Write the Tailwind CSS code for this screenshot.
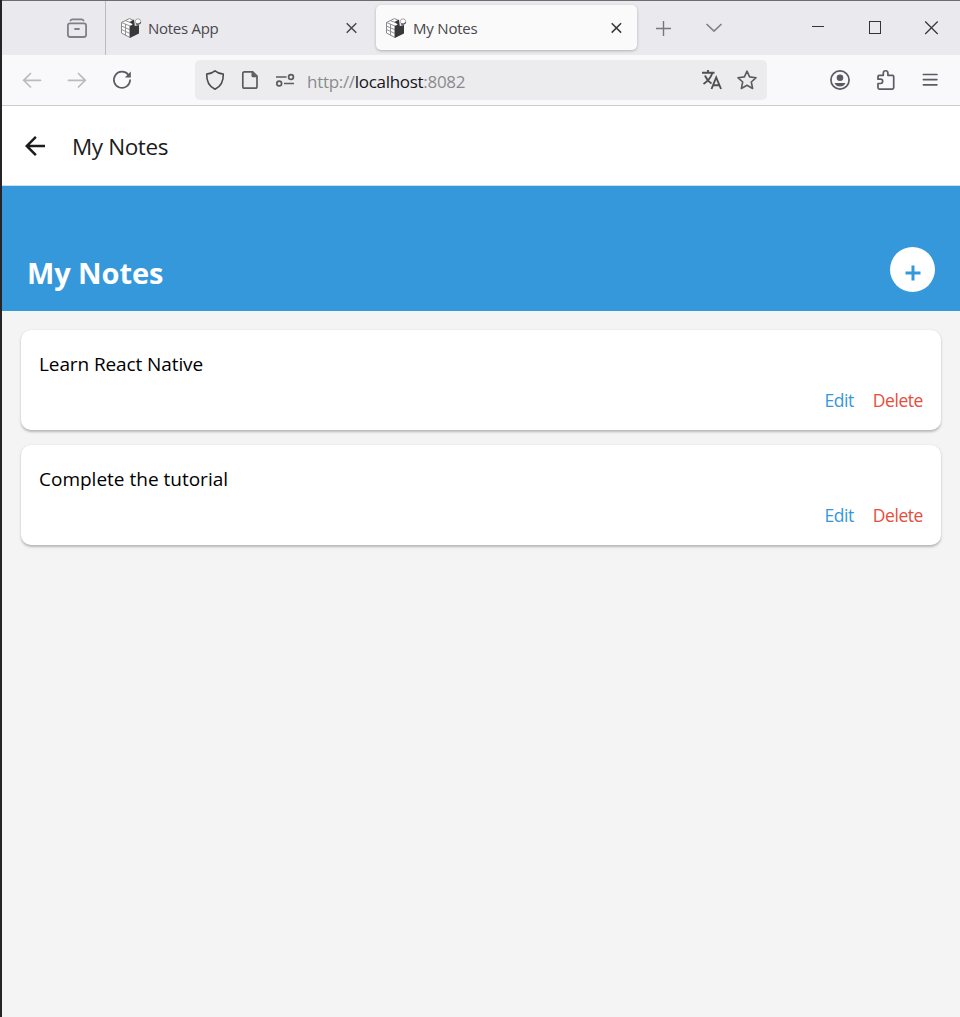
<!DOCTYPE html>
<html lang="en">
<head>
<meta charset="utf-8">
<title>My Notes</title>
<script src="https://cdn.jsdelivr.net/npm/@tailwindcss/browser@4"></script>
</head>
<body class="h-[1017px] w-[960px] overflow-hidden bg-[#f4f4f4] font-['Open_Sans','Noto_Sans',sans-serif]">
<svg class="hidden">
  <symbol id="cube" viewBox="0 0 22 22">
    <path d="M1.500 5.500 9.500 1.500l4 2-1 5-2.500 1v11L1.500 16z" fill="#fdfdfd" stroke="#88888b" stroke-width="1"/>
    <path d="M1.500 5.500l8.500 3.500M1.500 9l8.500 3.800M1.500 12.500l8.500 4M5.500 7v11.500M5 3.500l8 3" fill="none" stroke="#929295" stroke-width="1"/>
    <path d="M9.800 9l3.200-1.500-3.500-2.500 4.500-2.500.8 6.500 4.200-1v8.500L9.800 21z" fill="#38383a"/>
    <circle cx="18" cy="4.500" r="2.700" fill="#fff" stroke="#909093" stroke-width=".8"/>
    <path d="M16 6.700c2 1 4 .3 4.700-1.500" fill="none" stroke="#48484a" stroke-width="1.100"/>
  </symbol>
</svg>
<div class="flex h-full flex-col border-l-2 border-[#242428]">
  <header class="h-[106px] shrink-0 border-t border-b border-t-[#6f6c70] border-b-[#cbcbd0] bg-[#f9f9fb] text-[#5b5b66]">
    <div class="flex h-[54px] bg-[#eae9ee]">
      <div class="flex w-[104px] items-center border-r border-[#bcbbc0] pl-[63px]">
        <svg class="mt-[2px] size-6" viewBox="0 0 24 24" fill="none" stroke="#808087" stroke-width="1.800" stroke-linecap="round"><path d="M5.500 3.500q.5-1.200 2-1.200h9q1.500 0 2 1.200"/><rect x="2.900" y="6.400" width="18.200" height="13.600" rx="2.200"/><path d="M10 12h4"/></svg>
      </div>
      <div class="flex w-[270px] items-center pl-[14px]">
        <svg class="size-[22px]"><use href="#cube"/></svg>
        <span class="ml-[6px] w-[191px] whitespace-nowrap text-[15px] tracking-[-0.28px] text-[#47474d]">Notes App</span>
        <svg class="mt-[2px] size-6" viewBox="0 0 24 24" fill="none" stroke="#47474d" stroke-width="1.500"><path d="M7.700 6.200l9.600 9.600M17.300 6.200L7.700 15.800"/></svg>
      </div>
      <div class="mt-1 flex h-[45px] w-[261px] items-center rounded-[5px] bg-[#fafafa] pl-[9px] shadow-[0_1px_3px_rgba(0,0,0,0.25)]">
        <svg class="size-[22px]"><use href="#cube"/></svg>
        <span class="ml-[6px] w-[191px] whitespace-nowrap pt-[2px] text-[15px] tracking-[-0.2px] text-[#47474d]">My Notes</span>
        <svg class="size-6" viewBox="0 0 24 24" fill="none" stroke="#38383d" stroke-width="1.500"><path d="M7.700 7.200l9.400 9.400M17.100 7.200L7.700 16.600"/></svg>
      </div>
      <div class="flex grow items-center">
        <svg class="ml-[14px] size-6" viewBox="0 0 24 24" fill="none" stroke="#77777c" stroke-width="1.400"><path d="M5 12.500h15M12.500 5v15"/></svg>
        <svg class="ml-[26px] size-6" viewBox="0 0 24 24" fill="none" stroke="#808085" stroke-width="1.600"><path d="M5.500 8l7.500 7.200L20.500 8"/></svg>
        <svg class="ml-[80px] size-6" viewBox="0 0 24 24" stroke="#333338" shape-rendering="crispEdges"><path d="M7 10.500h12"/></svg>
        <svg class="ml-[33px] size-6" viewBox="0 0 24 24" fill="none" stroke="#333338" shape-rendering="crispEdges"><rect x="7.500" y="5.500" width="11" height="12"/></svg>
        <svg class="ml-[32px] size-6" viewBox="0 0 24 24" fill="none" stroke="#333338" stroke-width="1.200"><path d="M7.200 5.500l12.500 12.500M19.700 5.500L7.200 18"/></svg>
      </div>
    </div>
    <div class="flex h-[50px] items-center">
      <svg class="ml-[18px] size-6" viewBox="0 0 24 24" fill="none" stroke="#bbbbbd" stroke-width="1.700" stroke-linecap="round"><path d="M20.500 12.300H4M10.500 5.500L3.700 12.300l6.800 6.700"/></svg>
      <svg class="ml-[21px] size-6" viewBox="0 0 24 24" fill="none" stroke="#bbbbbd" stroke-width="1.700" stroke-linecap="round"><path d="M3.500 12.300H20M13.500 5.500l6.800 6.800-6.800 6.700"/></svg>
      <svg class="ml-[21px] size-6" viewBox="0 0 24 24" fill="none" stroke="#5b5b66" stroke-width="1.700" stroke-linecap="round"><path d="M18.300 6.700A8.100 8.100 0 1 0 20.100 12"/><path d="M20.800 3.500v6h-6z" fill="#5b5b66" stroke="none"/></svg>
      <div class="ml-[61px] flex h-10 w-[572px] items-center rounded-[5px] bg-[#ececee]">
        <svg class="ml-[8px] size-6" viewBox="0 0 24 24" fill="none" stroke="#4b4b52" stroke-width="1.600" stroke-linejoin="round"><path d="M12 2.800c2.500 2.100 5.500 3 8.300 3.300.2 7-2 12.400-8.300 15.200C5.700 18.500 3.500 13.100 3.700 6.100 6.500 5.800 9.500 4.900 12 2.800z"/></svg>
        <svg class="ml-[11px] size-6" viewBox="0 0 24 24" fill="none" stroke="#5b5b60" stroke-width="1.700" stroke-linejoin="round"><path d="M6.500 3.800h8.200l4.300 4.300v10.400q0 1.700-1.700 1.700H6.500q-1.700 0-1.700-1.700V5.500q0-1.700 1.700-1.700z"/><path d="M13.500 3.500l5.800 5.800h-4.300q-1.500 0-1.500-1.500z" fill="#5b5b60" stroke="none"/></svg>
        <svg class="ml-[11px] size-6" viewBox="0 0 24 24" fill="none" stroke="#5b5b60" stroke-width="1.700"><path d="M3 9h10.500M11 15.500h10"/><circle cx="18" cy="9" r="2.400"/><circle cx="6.200" cy="15.500" r="2.400"/></svg>
        <span class="ml-[10px] w-[393px] whitespace-nowrap pt-[4px] text-[17px] tracking-[-0.3px] text-[#8a8a8e]">http://<span class="text-[#15141a]">localhost</span>:8082</span>
        <svg class="size-6" viewBox="0 0 24 24" fill="none" stroke="#4f4f54" stroke-width="1.900"><path d="M2 4.700h12.500M8 2v2.700M12.300 5C11 9.500 8 13 3.500 16M5 7.500c1.300 3.300 3.300 6 6.500 8M11.500 21l4.700-11.500L21 21M13.200 17.300h6.200"/></svg>
        <svg class="ml-[11px] size-6" viewBox="0 0 24 24" fill="none" stroke="#5b5b60" stroke-width="1.600" stroke-linejoin="round"><path d="M12 3.200l2.600 5.700 6.500.8-4.800 4.300 1.300 6.500L12 17.300l-5.600 3.200 1.300-6.500-4.800-4.300 6.500-.8z"/></svg>
      </div>
      <svg class="ml-[61px] size-6" viewBox="0 0 24 24" fill="#5b5b66"><circle cx="12" cy="12" r="9.100" fill="none" stroke="#5b5b66" stroke-width="1.700"/><circle cx="12" cy="9.800" r="3.300"/><path d="M6.500 15h11c-1 2.300-3 3.600-5.500 3.600S7.500 17.300 6.500 15z"/></svg>
      <svg class="ml-[21px] size-6" viewBox="0 0 24 24" fill="none" stroke="#5b5b66" stroke-width="1.700" stroke-linejoin="round"><path d="M6.300 7.300h4V5c0-3 4.600-3 4.600 0v2.300h4.500q1.300 0 1.300 1.300v11.200q0 1.300-1.300 1.300H6.300q-1.300 0-1.300-1.300v-4.300h2.500c2.900 0 2.900-4.300 0-4.300H5V8.600q0-1.300 1.300-1.300z"/></svg>
      <svg class="ml-[21px] size-6" viewBox="0 0 24 24" fill="none" stroke="#5b5b66" stroke-width="1.700" stroke-linecap="round"><path d="M5.400 6.500h13.500M5.400 11.600h13.500M5.400 16.800h13.500"/></svg>
    </div>
  </header>

  <nav class="flex h-20 shrink-0 items-center border-b border-[#d3dfe8] bg-white">
    <svg class="ml-[18px] size-[30px]" viewBox="0 0 24 24" fill="#1c1c1e"><path d="M20 11H7.830l5.590-5.590L12 4l-8 8 8 8 1.410-1.410L7.830 13H20z"/></svg>
    <h1 class="ml-[22px] whitespace-nowrap pt-[3px] text-[22.5px] tracking-[-0.4px] text-[#1c1c1e]">My Notes</h1>
  </nav>

  <section class="flex h-[125px] shrink-0 items-end justify-between bg-[#3498db] pr-[25px] pb-[19px] pl-[25px]">
    <h2 class="mb-px whitespace-nowrap text-[29px] leading-[36px] font-bold tracking-[-0.1px] text-white">My Notes</h2>
    <button class="flex size-[45px] items-center justify-center rounded-full bg-white pt-[6px]"><svg class="size-4" viewBox="0 0 16 16" stroke="#3498db" stroke-width="3"><path d="M.5 8h15M8 .5v15"/></svg></button>
  </section>

  <main class="flex flex-col gap-[15px] py-[19px] pr-[19px] pl-[19px]">
    <article class="flex h-[100px] flex-col rounded-[10px] bg-white px-[18px] pt-[21px] shadow-[0_1.5px_2.5px_rgba(0,0,0,0.25)]">
      <p class="text-[19px] leading-[27px] tracking-[-0.1px] text-black">Learn React Native</p>
      <div class="mt-[10px] flex justify-end gap-[19px] text-[17.5px] leading-6 tracking-[-0.45px]"><a class="text-[#3498db]">Edit</a><a class="text-[#e74c3c]">Delete</a></div>
    </article>
    <article class="flex h-[100px] flex-col rounded-[10px] bg-white px-[18px] pt-[21px] shadow-[0_1.5px_2.5px_rgba(0,0,0,0.25)]">
      <p class="text-[19px] leading-[27px] text-black">Complete the tutorial</p>
      <div class="mt-[10px] flex justify-end gap-[19px] text-[17.5px] leading-6 tracking-[-0.45px]"><a class="text-[#3498db]">Edit</a><a class="text-[#e74c3c]">Delete</a></div>
    </article>
  </main>
</div>
</body>
</html>
